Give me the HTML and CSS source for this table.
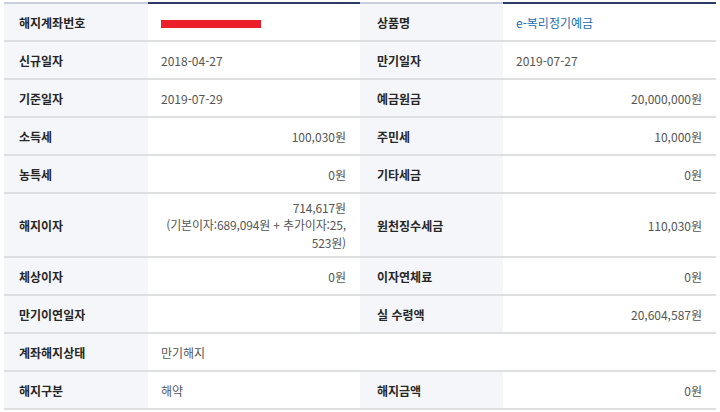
FILE: index.html
```html
<!DOCTYPE html>
<html lang="ko">
<head>
<meta charset="utf-8">
<link rel="stylesheet" href="styles.css">
</head>
<body>
<div class="wrap">
  <div class="table">
    <div class="th first">해지계좌번호</div>
    <div class="td first"><span class="redact"></span></div>
    <div class="th th2 first">상품명</div>
    <div class="td first"><span class="link">e-복리정기예금</span></div>

    <div class="th">신규일자</div>
    <div class="td">2018-04-27</div>
    <div class="th th2">만기일자</div>
    <div class="td">2019-07-27</div>

    <div class="th">기준일자</div>
    <div class="td">2019-07-29</div>
    <div class="th th2">예금원금</div>
    <div class="td num">20,000,000원</div>

    <div class="th">소득세</div>
    <div class="td num">100,030원</div>
    <div class="th th2">주민세</div>
    <div class="td num">10,000원</div>

    <div class="th">농특세</div>
    <div class="td num">0원</div>
    <div class="th th2">기타세금</div>
    <div class="td num">0원</div>

    <div class="th tall">해지이자</div>
    <div class="td num tall"><span class="lines"><span>714,617원</span><span>(기본이자:689,094원 + 추가이자:25,</span><span>523원)</span></span></div>
    <div class="th th2 tall">원천징수세금</div>
    <div class="td num tall">110,030원</div>

    <div class="th">체상이자</div>
    <div class="td num">0원</div>
    <div class="th th2">이자연체료</div>
    <div class="td num">0원</div>

    <div class="th">만기이연일자</div>
    <div class="td"></div>
    <div class="th th2">실 수령액</div>
    <div class="td num">20,604,587원</div>

    <div class="th">계좌해지상태</div>
    <div class="td span3">만기해지</div>

    <div class="th">해지구분</div>
    <div class="td">해약</div>
    <div class="th th2">해지금액</div>
    <div class="td num">0원</div>
  </div>
</div>
</body>
</html>
```

FILE: styles.css
```css
html, body {
  margin: 0;
  padding: 0;
  background: #ffffff;
}

.wrap {
  padding: 2px 4px 0 4px;
}

.table {
  display: grid;
  grid-template-columns: 144px 212px 143px 213px;
  width: 712px;
  font-family: "Noto Sans CJK KR", "Noto Sans", sans-serif;
  font-size: 12px;
}

.th, .td {
  box-sizing: border-box;
  height: 38px;
  border-bottom: 2px solid #dedfe1;
  display: flex;
  align-items: center;
}

.th {
  background: #f5f6f9;
  color: #262626;
  font-weight: 700;
  padding-left: 15px;
}

.th2 {
  padding-left: 17px;
}

.td {
  color: #555555;
  padding: 0 14px 0 13px;
}

.first {
  height: 40px;
  padding-top: 1px;
}

.first.th {
  border-top: 2px solid #c9cfdc;
}

.first.td {
  border-top: 2px solid #2c3a66;
}

.num {
  justify-content: flex-end;
  text-align: right;
}

.tall {
  height: 64px;
}

.lines {
  display: flex;
  flex-direction: column;
  align-items: flex-end;
  line-height: 17.5px;
  white-space: nowrap;
  letter-spacing: -0.15px;
}

.span3 {
  grid-column: span 3;
}

.redact {
  display: block;
  width: 100px;
  height: 8px;
  background: #ea1f29;
  margin-top: 2px;
}

.link {
  color: #1d6db3;
}
```
